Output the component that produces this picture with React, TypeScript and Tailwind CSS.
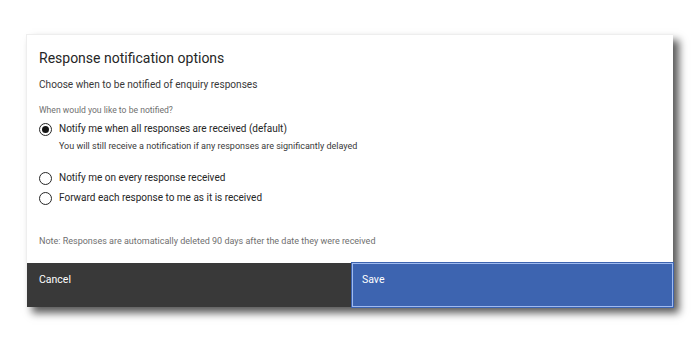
export default function App() {
  const font = { fontFamily: 'Roboto, "Noto Sans", sans-serif' }
  return (
    <div className="w-[700px] h-[343px] bg-white relative" style={font}>
      <div className="absolute left-[26px] top-[34px] w-[647px] h-[273px] flex flex-col bg-white border-t border-l border-[#eeeeee] shadow-[6px_6px_8px_rgba(0,0,0,0.65)]">
        <div className="flex-1 pl-[12px] pt-[13px]">
          <h2 className="text-[14px] leading-[20px] text-[#262626]">Response notification options</h2>
          <p className="mt-[10px] text-[10.1px] leading-[14px] text-[#393939]">Choose when to be notified of enquiry responses</p>
          <p className="mt-[12px] text-[8.6px] leading-[12px] text-[#6f6f6f]">When would you like to be notified?</p>
          <div className="mt-[6px] flex flex-col">
            <Radio checked label="Notify me when all responses are received (default)" />
            <p className="ml-[20px] mt-[4px] text-[9px] leading-[12px] text-[#393939]">
              You will still receive a notification if any responses are significantly delayed
            </p>
            <div className="mt-[19px]">
              <Radio label="Notify me on every response received" />
            </div>
            <div className="mt-[6px]">
              <Radio label="Forward each response to me as it is received" />
            </div>
          </div>
          <p className="mt-[30px] text-[9px] leading-[12px] text-[#6f6f6f]">
            Note: Responses are automatically deleted 90 days after the date they were received
          </p>
        </div>
        <div className="h-[44px] flex">
          <button className="w-[325px] bg-[#393939] text-white text-[10.5px] text-left pl-[12px] pb-[10px]">Cancel</button>
          <button className="flex-1 bg-[#3d64b0] text-white text-[10.5px] text-left pl-[9px] pb-[10px] border border-[#9fbaf0] outline outline-1 outline-[#3d64b0]">Save</button>
        </div>
      </div>
    </div>
  )
}

function Radio({ checked, label }: { checked?: boolean; label: string }) {
  return (
    <div className="flex items-center gap-[7px] h-[14px]">
      <span className="w-[13px] h-[13px] rounded-full border border-[#262626] flex items-center justify-center">
        {checked && <span className="w-[7px] h-[7px] rounded-full bg-[#161616]" />}
      </span>
      <span className="text-[10px] leading-[14px] text-[#262626]">{label}</span>
    </div>
  )
}
